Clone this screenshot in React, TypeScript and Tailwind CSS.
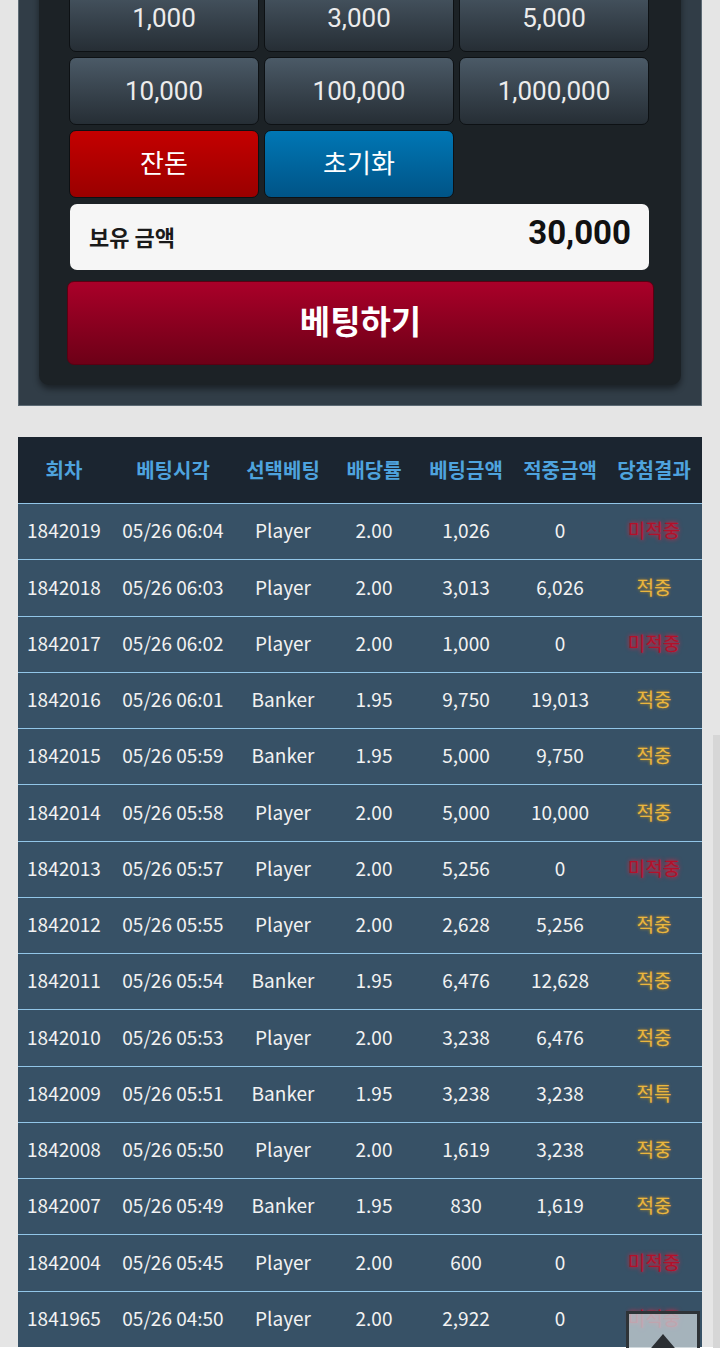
import React from 'react';

type Row = {
  round: string;
  time: string;
  pick: string;
  odds: string;
  bet: string;
  win: string;
  result: string;
};

const rows: Row[] = [
  { round: '1842019', time: '05/26 06:04', pick: 'Player', odds: '2.00', bet: '1,026', win: '0', result: '미적중' },
  { round: '1842018', time: '05/26 06:03', pick: 'Player', odds: '2.00', bet: '3,013', win: '6,026', result: '적중' },
  { round: '1842017', time: '05/26 06:02', pick: 'Player', odds: '2.00', bet: '1,000', win: '0', result: '미적중' },
  { round: '1842016', time: '05/26 06:01', pick: 'Banker', odds: '1.95', bet: '9,750', win: '19,013', result: '적중' },
  { round: '1842015', time: '05/26 05:59', pick: 'Banker', odds: '1.95', bet: '5,000', win: '9,750', result: '적중' },
  { round: '1842014', time: '05/26 05:58', pick: 'Player', odds: '2.00', bet: '5,000', win: '10,000', result: '적중' },
  { round: '1842013', time: '05/26 05:57', pick: 'Player', odds: '2.00', bet: '5,256', win: '0', result: '미적중' },
  { round: '1842012', time: '05/26 05:55', pick: 'Player', odds: '2.00', bet: '2,628', win: '5,256', result: '적중' },
  { round: '1842011', time: '05/26 05:54', pick: 'Banker', odds: '1.95', bet: '6,476', win: '12,628', result: '적중' },
  { round: '1842010', time: '05/26 05:53', pick: 'Player', odds: '2.00', bet: '3,238', win: '6,476', result: '적중' },
  { round: '1842009', time: '05/26 05:51', pick: 'Banker', odds: '1.95', bet: '3,238', win: '3,238', result: '적특' },
  { round: '1842008', time: '05/26 05:50', pick: 'Player', odds: '2.00', bet: '1,619', win: '3,238', result: '적중' },
  { round: '1842007', time: '05/26 05:49', pick: 'Banker', odds: '1.95', bet: '830', win: '1,619', result: '적중' },
  { round: '1842004', time: '05/26 05:45', pick: 'Player', odds: '2.00', bet: '600', win: '0', result: '미적중' },
  { round: '1841965', time: '05/26 04:50', pick: 'Player', odds: '2.00', bet: '2,922', win: '0', result: '미적중' },
];

const chips = ['1,000', '3,000', '5,000', '10,000', '100,000', '1,000,000'];

const headers = ['회차', '베팅시각', '선택베팅', '배당률', '베팅금액', '적중금액', '당첨결과'];
const colWidths = ['w-[92px]', 'w-[126px]', 'w-[94px]', 'w-[88px]', 'w-[96px]', 'w-[92px]', 'w-[96px]'];

const btnBase =
  'h-[68px] rounded-[7px] border border-[#0d1114] flex items-center justify-center text-[26px] text-[#ececec]';

export default function App() {
  return (
    <div className="min-h-screen bg-[#e5e5e5] font-['Roboto','Noto_Sans_CJK_KR',sans-serif]">
      {/* betting panel */}
      <div className="mx-[18px] -mt-[16px] bg-[#313d47] border-x border-b border-[#5c6a74] pb-[20px]">
        <div className="mx-[20px] bg-[#1c2226] rounded-b-[10px] shadow-[0_4px_6px_rgba(0,0,0,0.45)] px-[30px] pb-[20px]">
          <div className="grid grid-cols-[190px_190px_190px] gap-[5px]">
            {chips.map((c) => (
              <button
                key={c}
                className={`${btnBase} bg-gradient-to-b from-[#4b5a67] to-[#262e35]`}
              >
                {c}
              </button>
            ))}
            <button className={`${btnBase} bg-gradient-to-b from-[#c40000] to-[#9a0000] text-white`}>
              잔돈
            </button>
            <button className={`${btnBase} bg-gradient-to-b from-[#0077b5] to-[#005487] text-white`}>
              초기화
            </button>
          </div>

          <div className="mt-[6px] w-[579px] ml-[1px] h-[66px] rounded-[7px] bg-[#f6f6f6] flex items-center justify-between pl-[19px] pr-[18px]">
            <span className="text-[22px] font-bold text-[#1a1a1a] font-['Noto_Sans_CJK_KR',sans-serif] -mt-[2px]">
              보유 금액
            </span>
            <span className="text-[33px] font-bold text-[#111] -mt-[8px]">30,000</span>
          </div>

          <button className="mt-[11px] -ml-[2px] w-[587px] h-[84px] rounded-[7px] border border-[#5a0012] bg-gradient-to-b from-[#aa0029] to-[#6d0017] flex items-center justify-center text-[33px] font-bold text-white font-['Noto_Sans_CJK_KR',sans-serif] pb-[4px]">
            베팅하기
          </button>
        </div>
      </div>

      {/* history table */}
      <div className="mx-[18px] mt-[31px] font-['Noto_Sans_CJK_KR',sans-serif]">
        <div className="flex h-[66px] bg-[#1b2530] items-center">
          {headers.map((h, i) => (
            <div
              key={h}
              className={`${colWidths[i]} text-center text-[20px] font-bold text-[#4ea3de]`}
            >
              {h}
            </div>
          ))}
        </div>
        {rows.map((r) => (
          <div
            key={r.round}
            className="flex h-[56.25px] items-center bg-[#375166] border-t border-[#92c6e8] text-[19px] text-[#f2f2f2] pb-[2px]"
          >
            <div className={`${colWidths[0]} text-center`}>{r.round}</div>
            <div className={`${colWidths[1]} text-center`}>{r.time}</div>
            <div className={`${colWidths[2]} text-center`}>{r.pick}</div>
            <div className={`${colWidths[3]} text-center`}>{r.odds}</div>
            <div className={`${colWidths[4]} text-center`}>{r.bet}</div>
            <div className={`${colWidths[5]} text-center`}>{r.win}</div>
            <div
              className={`${colWidths[6]} text-center ${
                r.result === '미적중'
                  ? 'text-[#b3102a] [text-shadow:0_0_4px_#ff1a3c]'
                  : 'text-[#eab63e] [text-shadow:0_0_3px_rgba(255,170,0,0.7)]'
              }`}
            >
              {r.result}
            </div>
          </div>
        ))}
      </div>

      {/* scrollbar thumb */}
      <div className="fixed right-0 top-[735px] w-[7px] h-[640px] bg-[#d6d6d6]" />

      {/* scroll to top */}
      <button className="fixed left-[626px] top-[1311px] w-[74px] h-[56px] border-[3px] border-[#2e3337] bg-[rgba(196,206,212,0.78)] flex justify-center">
        <svg width="34" height="24" viewBox="0 0 34 24" className="mt-[20px]">
          <polygon points="17,0 34,20 0,20" fill="#2b2f33" />
        </svg>
      </button>
    </div>
  );
}
